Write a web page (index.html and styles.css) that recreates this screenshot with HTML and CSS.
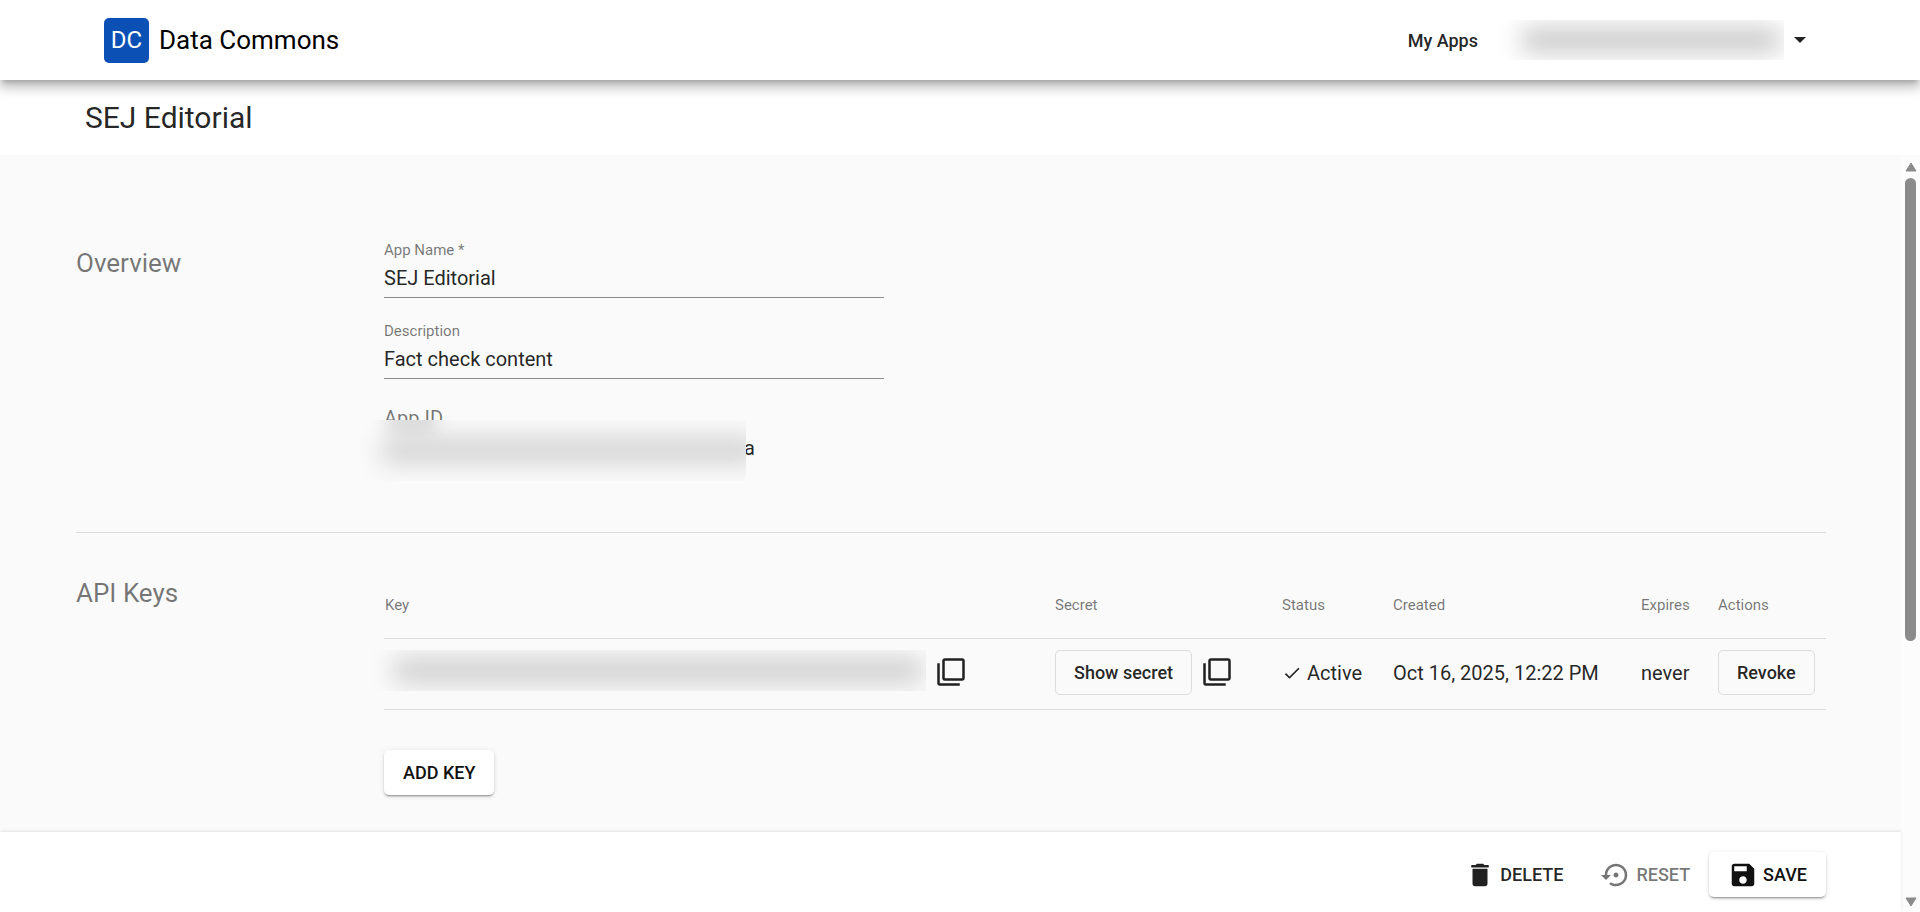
FILE: index.html
```html
<!DOCTYPE html>
<html lang="en">
<head>
  <meta charset="UTF-8" />
  <meta name="viewport" content="width=device-width, initial-scale=1.0" />
  <title>SEJ Editorial - Data Commons</title>
  <link rel="stylesheet" href="styles.css">
</head>
<body>
  <header class="topbar">
    <a class="brand" href="#">
      <span class="logo">DC</span>
      <span class="brand-name">Data Commons</span>
    </a>
    <nav class="topnav">
      <a class="nav-link" href="#">My Apps</a>
      <button type="button" class="account" aria-label="Account menu">
        <span class="redacted redacted-email"></span>
        <svg class="caret" viewBox="0 0 12 6" aria-hidden="true"><path d="M0 0h12L6 6z" /></svg>
      </button>
    </nav>
  </header>

  <h1 class="page-title">SEJ Editorial</h1>

  <div class="workspace">
    <form class="app-form" id="app-form">
      <div class="pane">
        <section class="section overview">
          <h2>Overview</h2>
          <div class="section-body">
            <div class="field">
              <label for="app-name">App Name *</label>
              <input type="text" id="app-name" name="name" value="SEJ Editorial" required />
            </div>
            <div class="field">
              <label for="description">Description</label>
              <input type="text" id="description" name="description" value="Fact check content" />
            </div>
            <div class="app-id">
              <div class="app-id-label">App ID</div>
              <div class="app-id-value"><span class="redacted redacted-id"></span>a</div>
            </div>
          </div>
        </section>

        <section class="section keys">
          <h2>API Keys</h2>
          <div class="section-body">
            <table class="key-table">
              <thead>
                <tr>
                  <th class="col-key">Key</th>
                  <th class="col-secret">Secret</th>
                  <th class="col-status">Status</th>
                  <th class="col-created">Created</th>
                  <th class="col-expires">Expires</th>
                  <th class="col-actions">Actions</th>
                </tr>
              </thead>
              <tbody>
                <tr>
                  <td>
                    <div class="cell">
                      <span class="redacted redacted-key"></span>
                      <button type="button" class="icon-btn" aria-label="Copy key">
                        <svg class="icon" viewBox="0 0 24 24"><path d="M3 5H1v16c0 1.1.9 2 2 2h16v-2H3V5zm18-4H7c-1.1 0-2 .9-2 2v14c0 1.1.9 2 2 2h14c1.1 0 2-.9 2-2V3c0-1.1-.9-2-2-2zm0 16H7V3h14v14z" /></svg>
                      </button>
                    </div>
                  </td>
                  <td>
                    <div class="cell">
                      <button type="button" class="btn btn-outline">Show secret</button>
                      <button type="button" class="icon-btn" aria-label="Copy secret">
                        <svg class="icon" viewBox="0 0 24 24"><path d="M3 5H1v16c0 1.1.9 2 2 2h16v-2H3V5zm18-4H7c-1.1 0-2 .9-2 2v14c0 1.1.9 2 2 2h14c1.1 0 2-.9 2-2V3c0-1.1-.9-2-2-2zm0 16H7V3h14v14z" /></svg>
                      </button>
                    </div>
                  </td>
                  <td>
                    <div class="cell status">
                      <svg class="check" viewBox="0 0 24 24" aria-hidden="true"><path d="M9 16.17L4.83 12l-1.42 1.41L9 19 21 7l-1.41-1.41z" /></svg>
                      Active
                    </div>
                  </td>
                  <td>Oct 16, 2025, 12:22 PM</td>
                  <td>never</td>
                  <td><button type="button" class="btn btn-outline">Revoke</button></td>
                </tr>
              </tbody>
            </table>
            <button type="button" class="btn btn-raised add-key">ADD KEY</button>
          </div>
        </section>
      </div>

      <footer class="actions">
        <button type="button" class="btn">
          <svg class="icon" viewBox="0 0 24 24" aria-hidden="true"><path d="M6 19c0 1.1.9 2 2 2h8c1.1 0 2-.9 2-2V7H6v12zM19 4h-3.500l-1-1h-5l-1 1H5v2h14V4z" /></svg>
          DELETE
        </button>
        <button type="reset" class="btn" disabled>
          <svg class="icon" viewBox="0 0 24 24" aria-hidden="true"><path d="M14 12c0-1.100-.9-2-2-2s-2 .9-2 2 .9 2 2 2 2-.9 2-2zm-2-9c-4.970 0-9 4.030-9 9H0l4 4 4-4H5c0-3.870 3.130-7 7-7s7 3.130 7 7-3.130 7-7 7c-1.510 0-2.910-.49-4.060-1.300l-1.420 1.440C8.040 20.300 9.940 21 12 21c4.970 0 9-4.030 9-9s-4.030-9-9-9z" /></svg>
          RESET
        </button>
        <button type="submit" class="btn btn-raised">
          <svg class="icon" viewBox="0 0 24 24" aria-hidden="true"><path d="M17 3H5c-1.110 0-2 .9-2 2v14c0 1.100.89 2 2 2h14c1.100 0 2-.9 2-2V7l-4-4zm-5 16c-1.660 0-3-1.340-3-3s1.340-3 3-3 3 1.340 3 3-1.340 3-3 3zm3-10H5V5h10v4z" /></svg>
          SAVE
        </button>
      </footer>
    </form>

    <div class="scrollbar" aria-hidden="true">
      <svg class="scroll-arrow" viewBox="0 0 12 10"><path d="M6 1l5 8H1z" /></svg>
      <div class="scroll-track"><div class="scroll-thumb"></div></div>
      <svg class="scroll-arrow" viewBox="0 0 12 10"><path d="M6 9L1 1h10z" /></svg>
    </div>
  </div>
</body>
</html>
```
FILE: styles.css
```css
* { box-sizing: border-box; }
body { margin: 0; height: 100vh; display: flex; flex-direction: column; font-family: Roboto, "Liberation Sans", sans-serif; font-size: 20px; color: rgba(0,0,0,0.87); background: #fff; }
h1, h2 { margin: 0; font-weight: 400; }
button, input { font: inherit; color: inherit; }
button { padding: 0; border: none; background: none; cursor: pointer; }
svg { display: block; flex: none; fill: currentColor; }

/* header */
.topbar { position: relative; z-index: 1; flex: none; display: flex; align-items: center; justify-content: space-between; height: 80px; padding: 0 108px 0 104px; background: #fff; box-shadow: 0 5px 5px -3px rgba(0,0,0,0.2), 0 8px 10px 1px rgba(0,0,0,0.14), 0 3px 14px 2px rgba(0,0,0,0.12); }
.brand { display: flex; align-items: center; gap: 10px; color: #000; text-decoration: none; }
.logo { display: flex; align-items: center; justify-content: center; width: 45px; height: 45px; border-radius: 5px; background: #0b50b4; color: #fff; font-size: 24px; }
.brand-name { font-size: 26px; }
.topnav { display: flex; align-items: center; gap: 20px; }
.nav-link { color: inherit; font-size: 18px; font-weight: 500; text-decoration: none; }
.account { display: flex; align-items: center; gap: 10px; padding: 0 6px 0 0; }
.caret { width: 12px; height: 6px; }

.page-title { flex: none; height: 75px; padding: 0 85px; font-size: 30px; line-height: 75px; }

/* hidden values: a soft bar cut off at the edges of its box */
.redacted { position: relative; display: block; flex: none; overflow: hidden; }
.redacted::before { content: ""; position: absolute; inset: 8px 4px 8px 24px; background: rgba(0,0,0,0.22); filter: blur(12px); }
.redacted-email { width: 286px; height: 40px; }
.redacted-id { width: 386px; height: 61px; margin: -13px -2px -18px -24px; background: #fafafa; }
.redacted-id::before { inset: 17px -12px 17px 22px; background: rgba(0,0,0,0.15); }
.redacted-id::after { content: ""; position: absolute; top: -6px; left: 28px; width: 48px; height: 14px; background: rgba(0,0,0,0.18); filter: blur(9px); }
.redacted-key { width: 556px; height: 41px; margin: 0 0 4px -15px; }
.redacted-key::before { background: rgba(0,0,0,0.17); }

/* layout */
.workspace { flex: 1; min-height: 0; display: flex; }
.app-form { flex: 1; min-width: 0; display: flex; flex-direction: column; }
.pane { flex: 1; min-height: 0; overflow: hidden; padding: 0 75px 0 76px; background: #fafafa; }
.section { display: grid; grid-template-columns: 308px 1fr; }
.section h2 { padding-top: 7px; font-size: 26px; line-height: 32px; color: rgba(0,0,0,0.54); }
.overview { padding: 85px 0 69px; border-bottom: 1px solid #dcdcdc; }
.keys { padding: 37px 0; }

/* fields */
.field { width: 500px; margin-bottom: 23px; }
.field label { display: block; font-size: 15px; line-height: 20px; color: rgba(0,0,0,0.54); }
.field input { display: block; width: 100%; height: 38px; padding: 0 0 1px; border: none; border-bottom: 1px solid #8c8c8c; border-radius: 0; background: none; outline: none; }
.app-id { padding-top: 1px; line-height: 30px; }
.app-id-label { color: rgba(0,0,0,0.54); }
.app-id-value { display: flex; }

/* api keys */
.key-table { width: 100%; border-collapse: collapse; table-layout: fixed; text-align: left; }
.key-table th { height: 68px; padding: 2px 1px 0; border-bottom: 1px solid #dcdcdc; font-size: 15px; font-weight: 400; color: rgba(0,0,0,0.54); }
.key-table td { height: 71px; padding: 0 1px 2px; border-bottom: 1px solid #dcdcdc; white-space: nowrap; }
.col-secret { width: 227px; }
.col-status { width: 111px; }
.col-created { width: 248px; }
.col-expires { width: 77px; }
.col-actions { width: 109px; }
.cell { display: flex; align-items: center; gap: 10px; }
.cell.status { gap: 5px; }
.check { width: 20px; height: 20px; }
.icon { width: 30px; height: 30px; }
.icon-btn { margin-bottom: 2px; }
.add-key { margin-top: 40px; }

/* buttons */
.btn { display: inline-flex; align-items: center; justify-content: center; gap: 5px; height: 45px; padding: 0 19px; border-radius: 5px; font-size: 18px; font-weight: 500; white-space: nowrap; }
.btn:disabled { color: rgba(0,0,0,0.54); cursor: default; }
.btn-outline { padding: 0 18px; border: 1px solid #dcdcdc; }
.btn-raised { background: #fff; color: #111; box-shadow: 0 3px 1px -2px rgba(0,0,0,0.2), 0 2px 2px rgba(0,0,0,0.14), 0 1px 5px rgba(0,0,0,0.12); }

.actions { position: relative; flex: none; display: flex; align-items: center; justify-content: flex-end; height: 80px; padding: 5px 75px 0 0; background: #fff; box-shadow: 0 -1px 3px rgba(0,0,0,0.1); }

/* scrollbar */
.scrollbar { flex: none; display: flex; flex-direction: column; align-items: center; gap: 6px; width: 19px; padding: 7px 0 5px; background: #fcfcfc; color: #8b8b8b; }
.scroll-arrow { width: 12px; height: 10px; stroke: currentColor; stroke-width: 1; stroke-linejoin: round; }
.scroll-track { flex: 1; }
.scroll-thumb { width: 11px; height: 65%; border-radius: 6px; background: #8b8b8b; }
```
